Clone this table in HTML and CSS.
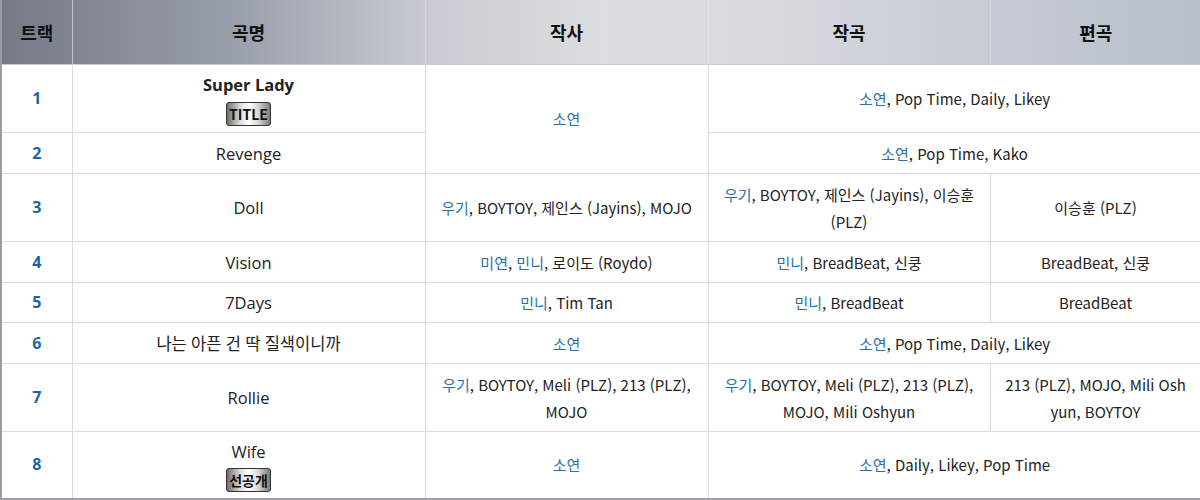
FILE: index.html
```html
<!DOCTYPE html>
<html lang="ko">
<head>
<meta charset="utf-8">
<title>트랙 리스트</title>
<link rel="stylesheet" href="styles.css">
</head>
<body>
<table class="tracks">
  <colgroup>
    <col class="c-num">
    <col class="c-title">
    <col class="c-lyric">
    <col class="c-comp">
    <col class="c-arr">
  </colgroup>
  <thead>
    <tr>
      <th>트랙</th>
      <th>곡명</th>
      <th>작사</th>
      <th>작곡</th>
      <th>편곡</th>
    </tr>
  </thead>
  <tbody>
    <tr class="tight">
      <td class="num">1</td>
      <td class="song"><b>Super Lady</b><br><span class="badge">TITLE</span></td>
      <td rowspan="2"><a>소연</a></td>
      <td colspan="2"><a>소연</a>, Pop Time, Daily, Likey</td>
    </tr>
    <tr>
      <td class="num">2</td>
      <td class="song">Revenge</td>
      <td colspan="2"><a>소연</a>, Pop Time, Kako</td>
    </tr>
    <tr>
      <td class="num">3</td>
      <td class="song">Doll</td>
      <td><a>우기</a>, BOYTOY, 제인스 (Jayins), MOJO</td>
      <td><a>우기</a>, BOYTOY, 제인스 (Jayins), 이승훈 (PLZ)</td>
      <td>이승훈 (PLZ)</td>
    </tr>
    <tr>
      <td class="num">4</td>
      <td class="song">Vision</td>
      <td><a>미연</a>, <a>민니</a>, 로이도 (Roydo)</td>
      <td><a>민니</a>, BreadBeat, 신쿵</td>
      <td>BreadBeat, 신쿵</td>
    </tr>
    <tr class="tight">
      <td class="num">5</td>
      <td class="song">7Days</td>
      <td><a>민니</a>, Tim Tan</td>
      <td><a>민니</a>, BreadBeat</td>
      <td>BreadBeat</td>
    </tr>
    <tr>
      <td class="num">6</td>
      <td class="song">나는 아픈 건 딱 질색이니까</td>
      <td><a>소연</a></td>
      <td colspan="2"><a>소연</a>, Pop Time, Daily, Likey</td>
    </tr>
    <tr>
      <td class="num">7</td>
      <td class="song">Rollie</td>
      <td><a>우기</a>, BOYTOY, Meli (PLZ), 213 (PLZ), MOJO</td>
      <td><a>우기</a>, BOYTOY, Meli (PLZ), 213 (PLZ), MOJO, Mili Oshyun</td>
      <td class="brk">213 (PLZ), MOJO, Mili Oshyun, BOYTOY</td>
    </tr>
    <tr class="tight">
      <td class="num">8</td>
      <td class="song">Wife<br><span class="badge">선공개</span></td>
      <td><a>소연</a></td>
      <td colspan="2"><a>소연</a>, Daily, Likey, Pop Time</td>
    </tr>
  </tbody>
</table>
</body>
</html>
```

FILE: styles.css
```css
html, body {
  margin: 0;
  padding: 0;
  background: #ffffff;
  overflow: hidden;
}

.tracks {
  width: 1200px;
  border-collapse: collapse;
  table-layout: fixed;
  font-family: "Noto Sans CJK KR", "Noto Sans", sans-serif;
  font-size: 15px;
  color: #222;
  border-left: 2px solid #9a9da3;
  border-bottom: 2px solid #9a9da3;
}

.c-num { width: 71px; }
.c-title { width: 353px; }
.c-lyric { width: 283px; }
.c-comp { width: 282px; }
.c-arr { width: 211px; }

.tracks thead tr {
  background: linear-gradient(90deg, #757a86 0%, #9ba1ac 20%, #c9ccd3 36%, #dcdde0 50%, #d6d9de 65%, #c6cbd4 82%, #b9c0cc 100%);
}

.tracks th {
  height: 64px;
  padding: 0;
  font-size: 18px;
  font-weight: 700;
  color: #111;
  text-align: center;
  vertical-align: middle;
  border-left: 1px solid rgba(255, 255, 255, 0.25);
  border-bottom: 1px solid #c9ccd1;
}

.tracks th:first-child {
  border-left: none;
  border-right: 1px solid #c4c6cb;
}

.tracks td {
  padding: 7px 10px 6px;
  line-height: 27px;
  text-align: center;
  vertical-align: middle;
  border: 1px solid #dcdcdc;
  border-top: none;
  word-break: keep-all;
}

.tracks tr.tight td {
  padding-top: 6px;
}

.tracks td.brk {
  word-break: break-all;
  padding-left: 12px;
  padding-right: 12px;
}

.tracks td.num {
  font-family: "Open Sans", "Noto Sans", sans-serif;
  font-weight: 700;
  color: #1d64a6;
  font-size: 16px;
}

.tracks td.song {
  font-family: "Open Sans", "Noto Sans CJK KR", sans-serif;
  font-size: 16.5px;
  color: #222;
}

.tracks td.song b {
  font-weight: 700;
}

.tracks a {
  color: #2b6fab;
  text-decoration: none;
}

.badge {
  display: inline-block;
  padding: 0 2px;
  line-height: 22px;
  font-family: "Noto Sans CJK KR", "Open Sans", sans-serif;
  font-size: 14px;
  font-weight: 700;
  color: #111;
  border: 1px solid #333;
  border-radius: 3px;
  background: linear-gradient(90deg, #6e6e6e 0%, #d9d9d9 30%, #ffffff 50%, #d9d9d9 72%, #7a7a7a 100%);
  vertical-align: middle;
}
```
